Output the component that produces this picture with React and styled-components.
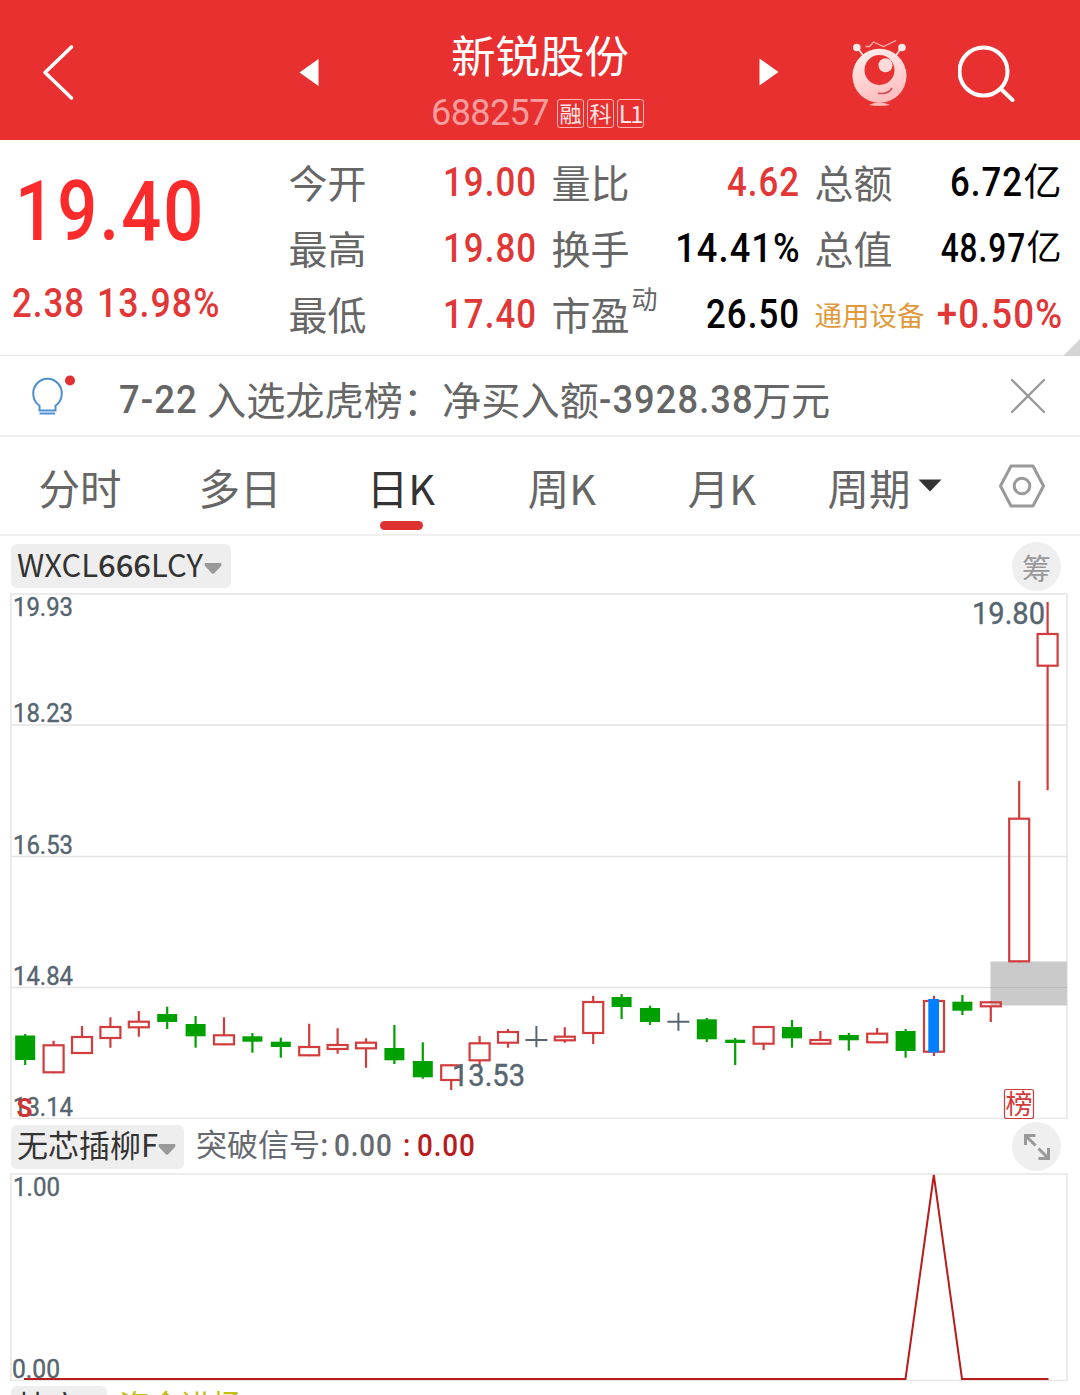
import React from 'react';
import styled, { createGlobalStyle } from 'styled-components';

const GlobalStyle = createGlobalStyle`
    * {
        box-sizing: border-box;
    }
    body {
        margin: 0;
        background: #fff;
        overflow: hidden;
    }
`
const Page = styled.div`
    width: 1080px;
    height: 1395px;
    display: flex;
    flex-direction: column;
    overflow: hidden;
    background: #fff;
    font-family: Roboto, 'Noto Sans CJK SC', sans-serif;
    white-space: nowrap;
`
const Num = styled.span`
    display: inline-block;
    width: ${p => p.$w ? p.$w + 'px' : 'auto'};
    padding-top: ${p => p.$top || 0}px;
    font-family: Roboto, 'Noto Sans CJK SC', sans-serif;
    font-weight: ${p => p.$weight || 500};
    letter-spacing: 0.03em;
    transform: scaleX(${p => p.$scale || 0.87});
    transform-origin: ${p => p.$origin || 'left'};
`

const Header = styled.header`
    height: 140px;
    flex-shrink: 0;
    display: grid;
    grid-template-columns: 296px 488px 68px 106px 122px;
    background: #e83030;
    color: #fff;
`
const BackButton = styled.div`
    padding: 43px 0 0 41px;
`
const Switcher = styled.div`
    display: flex;
    justify-content: space-between;
`
const ArrowBox = styled.div`
    width: 30px;
    padding: 57px 0 0 ${p => p.$left}px;
`
const StockTitle = styled.div`
    display: flex;
    flex-direction: column;
    align-items: center;
`
const StockName = styled.div`
    margin-top: 21px;
    height: 67px;
    font-size: 44.5px;
    line-height: 66px;
    font-family: 'Noto Sans CJK SC', sans-serif;
`
const StockCode = styled.div`
    display: flex;
    align-items: center;
    height: 50px;
    color: #f69d9d;
    font-size: 36px;
    margin-left: -5px;
    letter-spacing: -0.6px;
`
const CodeTags = styled.div`
    display: flex;
    gap: 3px;
    margin-left: 8px;
    letter-spacing: 0;
`
const CodeTag = styled.span`
    width: 27px;
    height: 29px;
    display: flex;
    justify-content: center;
    border: 1px solid #ffb4b4;
    border-radius: 3px;
    color: #ffe6e6;
    font-size: ${p => p.$latin ? 24 : 22}px;
    line-height: 25px;
    letter-spacing: ${p => p.$latin ? -1.5 : 0}px;
    font-family: 'Noto Sans CJK SC', sans-serif;
`
const MascotBox = styled.div`
    padding-top: 36px;
`
const SearchBox = styled.div`
    padding-top: 42px;
`

const Quote = styled.section`
    position: relative;
    height: 216px;
    flex-shrink: 0;
    display: flex;
    border-bottom: 1px solid #e8e8e8;
`
const PriceBlock = styled.div`
    width: 288.5px;
    color: #e13737;
`
const Price = styled.div`
    height: 118px;
    padding: 22px 0 0 15px;
    font-size: 83px;
    line-height: 100px;
    color: #fb2b2b;
`
const Change = styled.div`
    display: flex;
    padding: 21px 0 0 12px;
    font-size: 40px;
    line-height: 50px;
`
const Stats = styled.div`
    display: grid;
    grid-template-columns: 249px 249px 247px;
    column-gap: 14px;
    grid-template-rows: repeat(3, 66px);
    padding-top: 9px;
`
const Stat = styled.div`
    display: flex;
    justify-content: space-between;
    align-items: center;
    font-size: 40px;
    color: ${p => p.$up ? '#e13737' : '#000'};
`
const StatLabel = styled.span`
    display: flex;
    color: ${p => p.$tone || '#666'};
    font-family: 'Noto Sans CJK SC', sans-serif;
    font-size: ${p => p.$tone ? 27.5 : 39}px;
    line-height: 60px;
    padding-bottom: ${p => p.$tone ? 1 : 2}px;
`
const Sup = styled.sup`
    font-size: 26px;
    line-height: 30px;
    margin-left: 2px;
    vertical-align: top;
`
const StatValue = styled.span`
    display: flex;
    align-items: center;
    line-height: 60px;
    padding-top: 1px;
`
const Unit = styled.span`
    font-family: 'Noto Sans CJK SC', sans-serif;
    font-size: ${p => p.$size}px;
    margin-top: -7px;
`
const Corner = styled.svg`
    position: absolute;
    right: 0;
    bottom: -1px;
`

const News = styled.section`
    height: 81px;
    flex-shrink: 0;
    display: flex;
    align-items: center;
    border-bottom: 2px solid #efefef;
    color: #666;
    font-size: 39.2px;
`
const BulbBox = styled.div`
    width: 119px;
    height: 79px;
    padding: 16px 0 0 30px;
`
const NewsText = styled.div`
    width: 889px;
    display: flex;
    line-height: 60px;
    padding-top: 7px;
    font-family: 'Noto Sans CJK SC', sans-serif;
`

const Tabs = styled.nav`
    height: 99px;
    flex-shrink: 0;
    display: grid;
    grid-template-columns: 160px 160px 162px 160px 160px 165px 113px;
    border-bottom: 2px solid #efefef;
`
const Tab = styled.div`
    display: flex;
    flex-direction: column;
    align-items: center;
    padding-top: 20px;
    font-family: 'Noto Sans CJK SC', sans-serif;
    font-size: 41.5px;
    line-height: 60px;
    color: ${p => p.$active ? '#333' : '#666'};
`
const TabRow = styled.div`
    display: flex;
    align-items: center;
    gap: 7px;
    svg {
        margin-bottom: 4px;
    }
`
const TabMark = styled.div`
    width: 43px;
    height: 9px;
    border-radius: 5px;
    margin-top: 4px;
    background: #e03131;
`
const SettingBox = styled.div`
    padding: 25px 0 0 30px;
`

const ChartBar = styled.div`
    height: ${p => p.$h}px;
    flex-shrink: 0;
    display: flex;
    justify-content: space-between;
    padding: ${p => p.$top}px 19px 0 11px;
`
const BarLeft = styled.div`
    display: flex;
    align-items: flex-start;
    gap: 12px;
`
const Chip = styled.div`
    width: ${p => p.$w}px;
    height: 44px;
    display: flex;
    align-items: center;
    padding-left: 6px;
    background: #eee;
    border-radius: 6px;
    color: #333;
    font-size: 31px;
    svg {
        margin-top: 4px;
    }
`
const ChipName = styled.span`
    width: ${p => p.$w}px;
    line-height: 40px;
    padding-bottom: ${p => p.$lift}px;
    font-family: 'Noto Sans CJK SC', sans-serif;
`
const Strong = styled.span`
    font-weight: 500;
`
const Legend = styled.div`
    display: flex;
    margin-top: -2px;
    font-family: 'Noto Sans CJK SC', sans-serif;
    font-size: 31px;
    line-height: 40px;
    color: ${p => p.$color || '#66696f'};
`
const LegendValue = styled.span`
    display: flex;
    padding-top: 2px;
    margin-left: ${p => p.$gap}px;
    font-size: 32px;
    color: ${p => p.$color || '#66696f'};
`
const RoundButton = styled.div`
    width: 49px;
    height: 49px;
    margin-top: ${p => p.$top || -2}px;
    display: flex;
    align-items: center;
    justify-content: center;
    border-radius: 50%;
    background: #efefef;
    color: #999;
    font-family: 'Noto Sans CJK SC', sans-serif;
    font-size: 29px;
    line-height: 44px;
`
const Chart = styled.svg`
    display: block;
    flex-shrink: 0;
    font-family: Roboto, sans-serif;
    font-weight: 500;
`

const RED = '#d23c3c';
const GREEN = '#00a000';
const SLATE = '#56656f';

// kind, high, body top, body bottom, low (u = up, d = down, x = flat)
const candles = [
    ['d', 1034, 1035.5, 1060, 1065],
    ['u', 1040.7, 1044.3, 1073.3, 1073.3],
    ['u', 1026, 1036, 1054, 1054],
    ['u', 1017.3, 1026, 1039, 1047.7],
    ['u', 1011, 1020.7, 1028.3, 1036.7],
    ['d', 1006.7, 1014, 1022, 1029],
    ['d', 1016, 1024, 1036.3, 1047.7],
    ['u', 1017.3, 1034.3, 1045.3, 1045.3],
    ['d', 1033, 1036.3, 1041.7, 1052.7],
    ['d', 1037.7, 1041.7, 1047, 1057.7],
    ['u', 1023.7, 1046, 1056.3, 1056.3],
    ['u', 1028.3, 1044, 1050, 1053.7],
    ['u', 1038.3, 1041.7, 1049.3, 1067.7],
    ['d', 1025, 1048, 1060.3, 1064],
    ['d', 1042.3, 1061, 1077.3, 1078.7],
    ['u', 1064.3, 1064.3, 1081, 1090],
    ['u', 1036, 1042.3, 1061.3, 1066.7],
    ['u', 1029, 1031, 1043.7, 1047.7],
    ['x', 1026, 1040, 1040, 1047.3],
    ['u', 1027.3, 1035.7, 1041.3, 1042.7],
    ['u', 995.7, 1001, 1034, 1044],
    ['d', 994, 997, 1007, 1019],
    ['d', 1005.7, 1008, 1022, 1025],
    ['x', 1012.7, 1021.7, 1021.7, 1030.7],
    ['d', 1018, 1019.3, 1039.3, 1042],
    ['d', 1038, 1039.7, 1043, 1065],
    ['u', 1026, 1026, 1044.7, 1050],
    ['d', 1020, 1027, 1038.3, 1047.7],
    ['u', 1031, 1039, 1044.7, 1044.7],
    ['d', 1033, 1035, 1040.3, 1050.7],
    ['u', 1028, 1032.7, 1043.3, 1043.3],
    ['d', 1029, 1031, 1051, 1057.7],
    ['u', 995.7, 1000, 1052.7, 1056],
    ['d', 995, 1001.7, 1010.7, 1015],
    ['u', 1001.3, 1001.3, 1007.3, 1022],
    ['u', 781, 817.7, 962.3, 962.3],
    ['u', 602, 633, 666.7, 790.3],
];

function Candle({ index, data }) {
    const [kind, high, top, bottom, low] = data;
    const x = 25.2 + index * 28.4;
    if (kind === 'x') {
        return (
            <path d={`M${x} ${high}V${low}M${x - 11} ${top}H${x + 11}`} stroke={SLATE} strokeWidth="2" />
        );
    }
    if (kind === 'd') {
        return (
            <g>
                <path d={`M${x} ${high}V${low}`} stroke={GREEN} strokeWidth="2.2" />
                <rect x={x - 10} y={top} width="20" height={bottom - top} fill={GREEN} />
            </g>
        );
    }
    return (
        <g stroke={RED} strokeWidth="2.2" fill="none">
            <path d={`M${x} ${high}V${top + 1}M${x} ${bottom - 1}V${low}`} />
            <rect x={x - 10} y={top + 1} width="20" height={bottom - top - 2} />
        </g>
    );
}

function AxisText({ x = 13, y, w = 60, size = 26, children }) {
    return (
        <text x={x} y={y} fontSize={size} fill={SLATE} fontWeight="400" stroke={SLATE} strokeWidth="0.4"
            textLength={w} lengthAdjust="spacingAndGlyphs">{children}</text>
    );
}

function Caret() {
    return (
        <svg width="18" height="11" viewBox="0 0 18 11">
            <path d="M1 0H17Q18 1 17 3L10 10.5Q9 11 8 10.5L1 3Q0 1 1 0Z" fill="#999" />
        </svg>
    );
}

function Mascot() {
    return (
        <svg width="56" height="74" viewBox="852 36 56 74">
            <defs>
                <linearGradient id="face" x1="0" y1="0" x2="0.3" y2="1">
                    <stop offset="0" stopColor="#fff1f0" />
                    <stop offset="1" stopColor="#ffbfc0" />
                </linearGradient>
            </defs>
            <path d="M857 47L863.5 56M902 47L895.5 56" stroke="#ffd9d9" strokeWidth="1.8" />
            <circle cx="856.8" cy="47.5" r="3.8" fill="#ffeaea" />
            <circle cx="902" cy="47.5" r="3.8" fill="#ffeaea" />
            <path d="M865.5 46.5H869.5L873.5 42L883.5 46.5L896 40.5" fill="none" stroke="#ffb0b0" strokeWidth="1.3" />
            <circle cx="879.5" cy="75.8" r="27" fill="url(#face)" />
            <circle cx="879.5" cy="70" r="15" fill="#e83030" />
            <circle cx="885.5" cy="65.2" r="7" fill="#ffdada" />
            <path d="M878 93.2Q888 95 892 88" fill="none" stroke="#d94a50" strokeWidth="1.6" />
            <path d="M869 105Q879.5 99.500 890 105Q879.5 107 869 105Z" fill="#ffb9b9" />
        </svg>
    );
}

function PriceChart() {
    return (
        <Chart width="1080" height="526" viewBox="0 593 1080 526">
            <path d="M11 725H1067M11 856.5H1067M11 987.5H1067" stroke="#e3e3e3" strokeWidth="1.3" />
            <rect x="11" y="594" width="1056" height="524.5" fill="none" stroke="#e6e6e6" strokeWidth="1.6" />
            <rect x="990.5" y="961.5" width="76.5" height="44" fill="#cacaca" />
            <path d="M990.5 987.5H1067" stroke="#b9b9b9" strokeWidth="1" />
            {candles.map((c, i) => <Candle key={i} index={i} data={c} />)}
            <rect x="928.3" y="999" width="10.7" height="53.5" fill="#0080ff" />
            <AxisText y={616}>19.93</AxisText>
            <AxisText y={722}>18.23</AxisText>
            <AxisText y={854}>16.53</AxisText>
            <AxisText y={985}>14.84</AxisText>
            <AxisText y={1116}>13.14</AxisText>
            <AxisText x={972} y={624} w={73} size={31}>19.80</AxisText>
            <AxisText x={452} y={1086} w={73} size={31}>13.53</AxisText>
            <text x="16.5" y="1117" fontSize="26" fontWeight="700" fill="#cc3535">S</text>
            <rect x="1004.5" y="1089.5" width="29" height="29" rx="2" fill="#fff" stroke={RED} strokeWidth="1.2" />
            <text x="1005.5" y="1113.5" fontSize="27" fontWeight="400" fill={RED} fontFamily="Noto Sans CJK SC">榜</text>
        </Chart>
    );
}

function SignalChart() {
    return (
        <Chart width="1080" height="208" viewBox="0 1173 1080 208">
            <path d="M11 1174H1067V1380.5H11Z" fill="none" stroke="#e6e6e6" strokeWidth="1.6" />
            <AxisText y={1196} w={47}>1.00</AxisText>
            <AxisText x={12} y={1378} w={48}>0.00</AxisText>
            <path d="M24 1379H905.5L933.8 1175L962 1379H1048.5" fill="none" stroke="#b81c1c" strokeWidth="2" />
        </Chart>
    );
}

export default function App() {
    return (
        <Page>
            <GlobalStyle />
            <Header>
                <BackButton>
                    <svg width="34" height="58" viewBox="0 0 34 58" fill="none" stroke="#fff" strokeWidth="3.6" strokeLinecap="round" strokeLinejoin="round">
                        <path d="M30.5 4L4 29.5L30.5 55" />
                    </svg>
                </BackButton>
                <Switcher>
                    <ArrowBox $left={3}>
                        <svg width="20" height="30" viewBox="0 0 20 30"><path d="M0.5 15.5L19.5 2V29Z" fill="#fff" /></svg>
                    </ArrowBox>
                    <StockTitle>
                        <StockName>新锐股份</StockName>
                        <StockCode>
                            688257
                            <CodeTags>
                                <CodeTag>融</CodeTag>
                                <CodeTag>科</CodeTag>
                                <CodeTag $latin>L1</CodeTag>
                            </CodeTags>
                        </StockCode>
                    </StockTitle>
                    <ArrowBox $left={5}>
                        <svg width="20" height="30" viewBox="0 0 20 30"><path d="M19.5 15L0.5 1.500V28.5Z" fill="#fff" /></svg>
                    </ArrowBox>
                </Switcher>
                <div />
                <MascotBox>
                    <Mascot />
                </MascotBox>
                <SearchBox>
                    <svg width="60" height="60" viewBox="956 42 60 60" fill="none" stroke="#fff" strokeWidth="4" strokeLinecap="round">
                        <circle cx="981.5" cy="71.5" r="24" />
                        <path d="M999.5 89.500L1010.5 100" />
                    </svg>
                </SearchBox>
            </Header>
            <Quote>
                <PriceBlock>
                    <Price><Num $scale={0.85}>19.40</Num></Price>
                    <Change>
                        <Num $w={85}>2.38</Num>
                        <Num $scale={0.89}>13.98%</Num>
                    </Change>
                </PriceBlock>
                <Stats>
                    <Stat $up>
                        <StatLabel>今开</StatLabel>
                        <StatValue><Num $origin="right">19.00</Num></StatValue>
                    </Stat>
                    <Stat $up>
                        <StatLabel>量比</StatLabel>
                        <StatValue><Num $origin="right">4.62</Num></StatValue>
                    </Stat>
                    <Stat>
                        <StatLabel>总额</StatLabel>
                        <StatValue><Num $origin="right">6.72</Num><Unit $size={38}>亿</Unit></StatValue>
                    </Stat>
                    <Stat $up>
                        <StatLabel>最高</StatLabel>
                        <StatValue><Num $origin="right">19.80</Num></StatValue>
                    </Stat>
                    <Stat>
                        <StatLabel>换手</StatLabel>
                        <StatValue><Num $origin="right" $scale={0.905}>14.41%</Num></StatValue>
                    </Stat>
                    <Stat>
                        <StatLabel>总值</StatLabel>
                        <StatValue><Num $origin="right" $scale={0.79}>48.97</Num><Unit $size={35}>亿</Unit></StatValue>
                    </Stat>
                    <Stat $up>
                        <StatLabel>最低</StatLabel>
                        <StatValue><Num $origin="right">17.40</Num></StatValue>
                    </Stat>
                    <Stat>
                        <StatLabel>市盈<Sup>动</Sup></StatLabel>
                        <StatValue><Num $origin="right">26.50</Num></StatValue>
                    </Stat>
                    <Stat $up>
                        <StatLabel $tone="#e09a3c">通用设备</StatLabel>
                        <StatValue><Num $origin="right" $scale={0.915}>+0.50%</Num></StatValue>
                    </Stat>
                </Stats>
                <Corner width="17" height="17"><path d="M17 0V17H0Z" fill="#d4d4d4" /></Corner>
            </Quote>
            <News>
                <BulbBox>
                    <svg width="48" height="46" viewBox="30 372 48 46">
                        <path d="M39.5 410.5V405.8A14.3 14.8 0 1 1 55.500 405.8V410.5ZM39.5 413.500H55" fill="none" stroke="#4f8fd0" strokeWidth="2" />
                        <circle cx="70" cy="380.5" r="5" fill="#e03131" />
                    </svg>
                </BulbBox>
                <NewsText>
                    <Num $w={88} $top={2} $scale={0.93}>7-22</Num>入选龙虎榜：净买入额<Num $w={153} $top={2} $scale={0.925}>-3928.38</Num>万元
                </NewsText>
                <svg width="40" height="40" viewBox="0 0 40 40" stroke="#999" strokeWidth="2.4" strokeLinecap="round">
                    <path d="M4 4L36 36M36 4L4 36" />
                </svg>
            </News>
            <Tabs>
                <Tab>分时</Tab>
                <Tab>多日</Tab>
                <Tab $active>日K<TabMark /></Tab>
                <Tab>周K</Tab>
                <Tab>月K</Tab>
                <Tab>
                    <TabRow>
                        周期
                        <svg width="24" height="13" viewBox="0 0 24 13"><path d="M0.5 0.5H23.5L12 12.5Z" fill="#333" /></svg>
                    </TabRow>
                </Tab>
                <SettingBox>
                    <svg width="50" height="48" viewBox="0 0 50 48" fill="none" stroke="#999" strokeWidth="3" strokeLinejoin="round">
                        <path d="M14 4H36L46.5 24L36 44H14L3.5 24Z" />
                        <circle cx="25" cy="24" r="7.8" />
                    </svg>
                </SettingBox>
            </Tabs>
            <ChartBar $h={57} $top={8}>
                <Chip $w={220}>
                    <ChipName $w={187} $lift={5}>WXCL<Strong>666</Strong>LCY</ChipName>
                    <Caret />
                </Chip>
                <RoundButton>筹</RoundButton>
            </ChartBar>
            <PriceChart />
            <ChartBar $h={54} $top={6}>
                <BarLeft>
                    <Chip $w={173}>
                        <ChipName $w={141} $lift={7}>无芯插柳F</ChipName>
                        <Caret />
                    </Chip>
                    <Legend>
                        突破信号:
                        <LegendValue $gap={5}><Num $w={69}>0.00</Num></LegendValue>
                        <LegendValue $gap={0} $color="#b81c1c"><Num $w={14}>:</Num><Num>0.00</Num></LegendValue>
                    </Legend>
                </BarLeft>
                <RoundButton $top={-3}>
                    <svg width="28" height="28" viewBox="0 0 28 28" fill="none" stroke="#999" strokeWidth="3">
                        <path d="M12.5 2.5H2.5V12M3 3L12.5 12.5M15.5 25.5H25.5V15M25 25L15.5 15.5" />
                    </svg>
                </RoundButton>
            </ChartBar>
            <SignalChart />
            <ChartBar $h={54} $top={5}>
                <BarLeft>
                    <Chip $w={96}>
                        <ChipName $w={66} $lift={7}>抄底</ChipName>
                        <Caret />
                    </Chip>
                    <Legend $color="#c3bd10">
                        资金进场:
                        <LegendValue $gap={5} $color="#c3bd10"><Num>0.00</Num></LegendValue>
                    </Legend>
                </BarLeft>
            </ChartBar>
        </Page>
    );
}
